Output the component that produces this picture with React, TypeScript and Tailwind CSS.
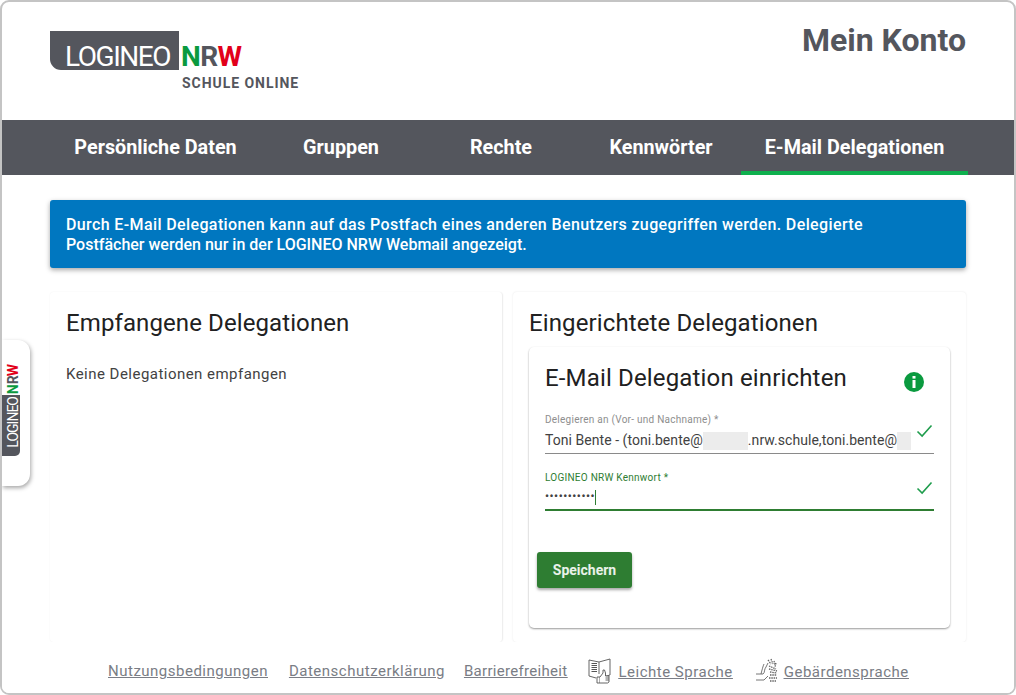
import React from "react";

const tabs: [string, string, boolean][] = [
  ["Persönliche Daten", "w-[211px]", false],
  ["Gruppen", "w-[160px]", false],
  ["Rechte", "w-[160px]", false],
  ["Kennwörter", "w-[160px]", false],
  ["E-Mail Delegationen", "w-[227px]", true],
];

function Check({ className }: { className?: string }) {
  return (
    <svg viewBox="0 0 16 14" className={className} fill="none" stroke="#1f9d4d" strokeWidth="1.6">
      <path d="M1 7.5 L5.6 12 L15 1.5" />
    </svg>
  );
}

function BookIcon() {
  return (
    <svg width="24" height="26" viewBox="0 0 24 26" fill="none" stroke="#555" strokeWidth="0.9">
      <path d="M1 2 L11 4 L22 1 V17 L17 18.5" />
      <path d="M1 2 V18 L8 20" />
      <path d="M11 4 V16" />
      <path d="M3.5 5.5 H9 M3.5 7.5 H9 M3.5 9.5 H9 M3.5 11.5 H9 M3.5 13.5 H9" strokeWidth="1.1" />
      <path d="M9 19 H12 V25 H9 Z" fill="#fff" />
      <path d="M12 19 L15 15 V12 H16.5 L17.5 15 V18 H21 V24 L19.5 25 H12" fill="#fff" />
      <path d="M17.5 20 H21 M17.5 22 H21" />
    </svg>
  );
}

function SignIcon() {
  return (
    <svg width="24" height="25" viewBox="0 0 24 25" fill="none" stroke="#666" strokeWidth="0.9">
      <path d="M1 16 H8 C10 15 9 11 11 9 L13 5" />
      <path d="M1 22 H9 L13 18" />
      <path d="M13 2 L16 6 M16 1 L18 6 M19 3 L20 7 M21 5 L20 9 M14 8 L21 11 M14 11 L22 13 M15 14 L22 15" strokeDasharray="1.5 0.8" strokeWidth="1.3" />
      <path d="M15 17 L22 17 M14 20 L22 20 M15 23 L21 23" strokeDasharray="1.5 0.8" strokeWidth="1.3" />
      <path d="M6 16 C7 12 8 8 9 6" />
    </svg>
  );
}

function Blur({ className }: { className: string }) {
  return <span className={`inline-block h-[18px] align-middle bg-[#ececec] ${className}`} />;
}

export default function App() {
  return (
    <div className="w-[1016px] h-[695px] overflow-hidden bg-white font-['Roboto',sans-serif]">
      <div className="relative flex flex-col w-[1016px] h-[695px] border-2 border-[#c4c4c4] rounded-[9px] overflow-hidden">
        {/* Header */}
        <header className="flex justify-between h-[118px] shrink-0 pl-[48px] pr-[48px]">
          <div className="pt-[29px]">
            <div className="flex items-start">
              <div className="w-[129px] h-[39px] bg-[#54565d] rounded-bl-[11px] pl-[15px] pt-[11px] leading-[30px] text-[28px] font-normal text-white tracking-[-1.45px] whitespace-nowrap">
                LOGINEO
              </div>
              <div className="pl-[2px] pt-[11px] leading-[30px] text-[28px] font-bold whitespace-nowrap tracking-[-0.6px]">
                <span className="text-[#0a9a3f]">N</span>
                <span className="text-[#54565d]">R</span>
                <span className="text-[#e2001a]">W</span>
              </div>
            </div>
            <div className="pl-[132px] pt-[2px] leading-[18px] text-[14px] font-bold text-[#54565d] tracking-[0.95px] whitespace-nowrap">
              SCHULE ONLINE
            </div>
          </div>
          <h1 className="pt-[17px] text-[32px] leading-[42px] font-bold text-[#54565d]">Mein Konto</h1>
        </header>

        {/* Tabs */}
        <nav className="flex h-[55px] shrink-0 bg-[#54565d] pl-[48px]">
          {tabs.map(([label, w, active]) => (
            <div
              key={label}
              className={`${w} flex items-center justify-center text-[19.8px] font-bold text-white ${
                active ? "border-b-[4px] border-[#0fb04e] pt-[4px]" : ""
              }`}
            >
              {label}
            </div>
          ))}
        </nav>

        {/* Main */}
        <main className="relative flex-1 flex flex-col px-[48px] pt-[25px] min-h-0">
          <div className="h-[68px] shrink-0 bg-[#0077c0] rounded-[3px] shadow-[0_2px_5px_rgba(0,0,0,0.35)] px-[16px] pt-[15px] text-[16px] leading-[20px] font-medium text-white whitespace-nowrap">
            <div className="tracking-[0.38px]">Durch E-Mail Delegationen kann auf das Postfach eines anderen Benutzers zugegriffen werden. Delegierte</div>
            <div>Postfächer werden nur in der LOGINEO NRW Webmail angezeigt.</div>
          </div>

          <div className="flex gap-[10px] pt-[24px] flex-1 min-h-0">
            <section className="w-[453px] h-[350px] border-r border-[#eeeeee] rounded-[4px] shadow-[0_0_2px_rgba(0,0,0,0.06)] px-[16px] pt-[16px]">
              <h2 className="text-[24px] leading-[30px] tracking-[0.1px] text-[#212121]">Empfangene Delegationen</h2>
              <p className="pt-[26px] text-[15px] leading-[20px] tracking-[0.47px] text-[#424242]">Keine Delegationen empfangen</p>
            </section>

            <section className="w-[453px] h-[350px] rounded-[4px] shadow-[0_0_2px_rgba(0,0,0,0.1)] px-[16px] pt-[16px]">
              <h2 className="text-[24px] leading-[30px] tracking-[0.12px] text-[#212121]">Eingerichtete Delegationen</h2>
              <div className="mt-[9px] h-[281px] rounded-[5px] shadow-[0_1px_2px_rgba(0,0,0,0.4)] px-[16px] pt-[15px]">
                <div className="flex justify-between h-[48px]">
                  <h3 className="text-[24px] leading-[32px] tracking-[0.16px] text-[#212121]">E-Mail Delegation einrichten</h3>
                  <div className="mt-[10px] mr-[10px] w-[20px] h-[20px] rounded-full bg-[#0a9a3f] text-white flex items-center justify-center">
                    <svg width="4" height="12" viewBox="0 0 4 12" fill="#fff">
                      <rect x="0.5" y="0" width="3" height="2.6" />
                      <rect x="0.5" y="4" width="3" height="8" />
                    </svg>
                  </div>
                </div>

                <div className="flex flex-col h-[41px] border-b border-[#8a8a8a] mt-[3px]">
                  <span className="text-[10px] leading-[14px] text-[#8e8e8e] tracking-[0.25px] whitespace-nowrap">Delegieren an (Vor- und Nachname) *</span>
                  <div className="flex items-center justify-between mt-[3px]">
                    <span className="text-[14px] leading-[20px] text-[#424242] whitespace-nowrap tracking-[0.05px]">
                      Toni Bente - (toni.bente@<Blur className="w-[45px]" />.nrw.schule,toni.bente@<Blur className="w-[14px]" />
                    </span>
                    <Check className="w-[17px] h-[14px] mr-[1px] -mt-[18px]" />
                  </div>
                </div>

                <div className="flex flex-col h-[40px] border-b-2 border-[#2e7d32] mt-[17px]">
                  <span className="text-[10px] leading-[14px] text-[#2e7d32] tracking-[0.25px] whitespace-nowrap">LOGINEO NRW Kennwort *</span>
                  <div className="flex items-center justify-between">
                    <span className="flex items-center h-[20px] mt-[2px] text-[#424242] text-[14px] leading-[20px]">
                      <span className="text-[11px] tracking-[0.6px] font-bold">•••••••••••</span>
                      <span className="w-px h-[15px] bg-[#2e7d32]" />
                    </span>
                    <Check className="w-[17px] h-[14px] mr-[1px] -mt-[16px]" />
                  </div>
                </div>

                <button className="block mt-[41px] -ml-[8px] w-[95px] h-[36px] rounded-[3px] bg-[#2e7d32] text-white/90 text-[14px] font-bold shadow-[0_2px_3px_rgba(0,0,0,0.35)]">
                  Speichern
                </button>
              </div>
            </section>
          </div>

          {/* Footer overlays the bottom of the panels */}
          <footer className="absolute left-0 right-0 bottom-0 h-[51px] bg-white flex items-start pl-[106px] pt-[16px] text-[15px] leading-[20px] text-[#7a7d85] underline tracking-[0.5px] whitespace-nowrap">
            <a className="mr-[21px] mt-[3px]">Nutzungsbedingungen</a>
            <a className="mr-[19px] mt-[3px]">Datenschutzerklärung</a>
            <a className="mr-[21px] mt-[3px] tracking-[0.3px]">Barrierefreiheit</a>
            <span className="mr-[6px]"><BookIcon /></span>
            <a className="mr-[22px] mt-[4px]">Leichte Sprache</a>
            <span className="mr-[5px]"><SignIcon /></span>
            <a className="mt-[4px]">Gebärdensprache</a>
          </footer>
        </main>

        {/* Side logo tab */}
        <div className="absolute left-0 top-[338px] w-[28px] h-[146px] bg-white rounded-r-[12px] shadow-[1px_2px_4px_rgba(0,0,0,0.35)]">
          <div className="absolute left-0 top-[55px] w-[18px] h-[61px] bg-[#54565d] rounded-br-[5px] flex items-end justify-end pb-[8px]">
            <span className="[writing-mode:vertical-rl] rotate-180 text-white text-[14px] leading-[14px] font-normal tracking-[-1px]">LOGINEO</span>
          </div>
          <div className="absolute left-[4px] top-[24px] flex items-center [writing-mode:vertical-rl] rotate-180 text-[14px] leading-[14px] font-bold tracking-[-0.3px]">
            <span className="text-[#0a9a3f]">N</span>
            <span className="text-[#54565d]">R</span>
            <span className="text-[#e2001a]">W</span>
          </div>
        </div>
      </div>
    </div>
  );
}
